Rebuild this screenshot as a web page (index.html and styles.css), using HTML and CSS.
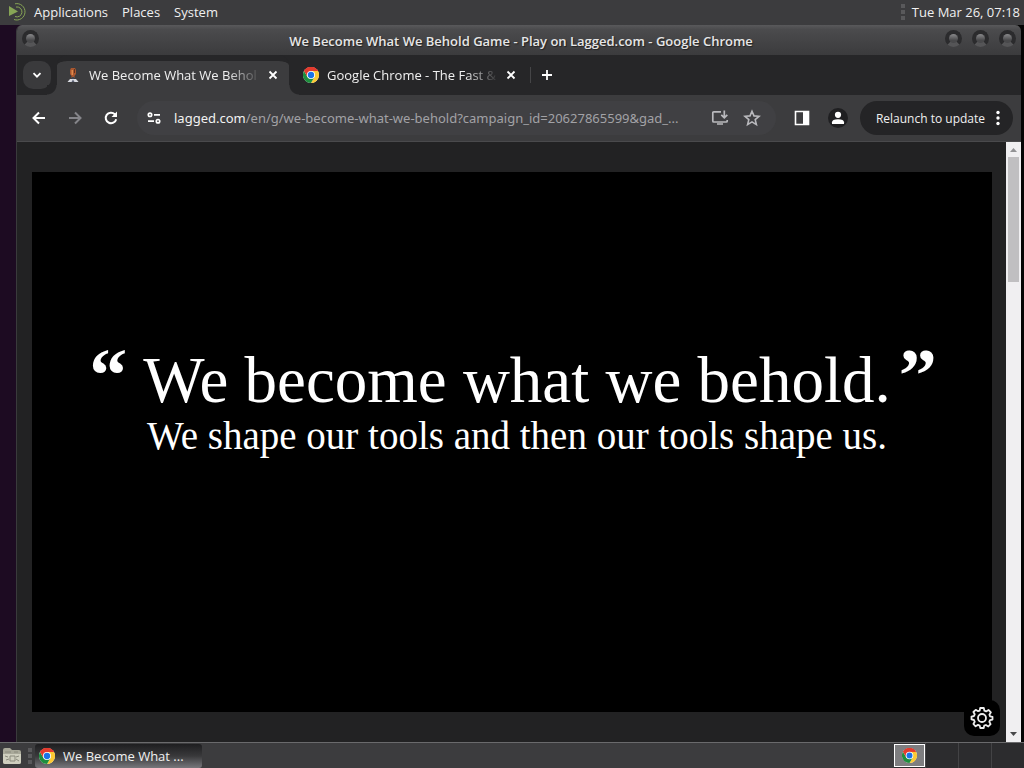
FILE: index.html
```html
<!DOCTYPE html>
<html lang="en">
<head>
    <meta charset="UTF-8">
    <meta name="viewport" content="width=device-width, initial-scale=1.0">
    <title>We Become What We Behold Game - Play on Lagged.com</title>
    <link rel="stylesheet" href="styles.css">
</head>
<body>

    <!-- shared logo -->
    <svg class="defs" width="0" height="0" aria-hidden="true">
        <symbol id="chrome" viewBox="0 0 48 48">
            <circle cx="24" cy="24" r="24" fill="#fff"/>
            <path d="M24 24 L3.2 12 A24 24 0 0 1 44.8 12 Z" fill="#e33b2e"/>
            <path d="M24 12 H44.8 A24 24 0 0 1 24 48 L34.4 30 Z" fill="#fcc934"/>
            <path d="M13.6 30 L3.2 12 A24 24 0 0 0 24 48 L34.4 30 Z" fill="#1e8e3e"/>
            <path d="M24 12 H44.8 A24 24 0 0 0 3.2 12 L13.6 30 Z" fill="#e33b2e"/>
            <circle cx="24" cy="24" r="12" fill="#fff"/>
            <circle cx="24" cy="24" r="9.5" fill="#1a73e8"/>
        </symbol>
    </svg>

    <header class="panel panel-top">
        <svg class="mate" viewBox="0 0 20 20" width="20" height="20" aria-hidden="true">
            <path d="M2 4 L11 9.5 L2 14 Z" fill="#87a556"/>
            <path d="M8 1.8 A8.2 8.2 0 1 1 7 17.5" fill="none" stroke="#87a556" stroke-width="1"/>
            <path d="M9 5 A5 5 0 1 1 8 14.5" fill="none" stroke="#87a556" stroke-width="1"/>
        </svg>
        <nav class="menu">
            <button>Applications</button>
            <button>Places</button>
            <button>System</button>
        </nav>
        <span class="handle"></span>
        <button class="clock">Tue Mar 26, 07:18</button>
    </header>

    <main class="desktop">
        <div class="window">

            <div class="titlebar">
                <button class="knob" aria-label="Window menu"></button>
                <h1>We Become What We Behold Game - Play on Lagged.com - Google Chrome</h1>
                <div class="knobs">
                    <button class="knob" aria-label="Minimize"></button>
                    <button class="knob" aria-label="Maximize"></button>
                    <button class="knob" aria-label="Close"></button>
                </div>
            </div>

            <div class="tabstrip">
                <button class="tab-search" aria-label="Search tabs">
                    <svg viewBox="0 0 12 12" width="12" height="12"><path d="M2.5 4.2 L6 7.7 L9.5 4.2" fill="none" stroke="#fff" stroke-width="1.8"/></svg>
                </button>
                <div class="tab active">
                    <svg viewBox="0 0 16 16" width="16" height="16" aria-hidden="true">
                        <path d="M6 1 H10 L11 3 V7 L9.5 9 V11 H6.5 V9 L5 7 V3 Z" fill="#a9572f"/>
                        <path d="M6.5 3 H8 V8 H6.5 Z" fill="#e08a4c"/>
                        <path d="M9 2 H10 V6 H9 Z" fill="#5d3322"/>
                        <path d="M7 10 H9 V12 H7 Z" fill="#3d4654"/>
                        <path d="M2.5 15 L5 12 H11 L13.5 15 Z" fill="#d9dbe2"/>
                        <path d="M6.5 15 L8 12.5 L9.5 15 Z" fill="#5a6072"/>
                    </svg>
                    <span class="tab-title">We Become What We Behol</span>
                    <button class="close" aria-label="Close tab">
                        <svg viewBox="0 0 10 10" width="10" height="10"><path d="M1.5 1.5 L8.5 8.5 M8.5 1.5 L1.5 8.5" stroke="#fff" stroke-width="1.8"/></svg>
                    </button>
                </div>
                <div class="tab">
                    <svg width="16" height="16" aria-hidden="true"><use href="#chrome"/></svg>
                    <span class="tab-title">Google Chrome - The Fast &amp;</span>
                    <button class="close" aria-label="Close tab">
                        <svg viewBox="0 0 10 10" width="10" height="10"><path d="M1.5 1.5 L8.5 8.5 M8.5 1.5 L1.5 8.5" stroke="#fff" stroke-width="1.8"/></svg>
                    </button>
                </div>
                <span class="tab-line"></span>
                <button class="new-tab" aria-label="New tab">
                    <svg viewBox="0 0 12 12" width="12" height="12"><path d="M6 1 V11 M1 6 H11" stroke="#fff" stroke-width="1.8"/></svg>
                </button>
            </div>

            <div class="toolbar">
                <button class="tool" aria-label="Back">
                    <svg viewBox="0 0 16 16" width="16" height="16"><path d="M14 8 H3 M8 2.5 L2.5 8 L8 13.5" fill="none" stroke="#fff" stroke-width="2"/></svg>
                </button>
                <button class="tool" aria-label="Forward">
                    <svg viewBox="0 0 16 16" width="16" height="16"><path d="M2 8 H13 M8 2.5 L13.5 8 L8 13.5" fill="none" stroke="#85858a" stroke-width="2"/></svg>
                </button>
                <button class="tool" aria-label="Reload">
                    <svg viewBox="0 0 16 16" width="16" height="16"><path d="M13.2 9.2 A5.3 5.3 0 1 1 11.8 4.2 L13 5.5" fill="none" stroke="#fff" stroke-width="2"/><path d="M14 1.5 V7 H8.5 Z" fill="#fff"/></svg>
                </button>
                <div class="omnibox">
                    <svg viewBox="0 0 16 16" width="16" height="16" aria-hidden="true">
                        <g fill="none" stroke="#fff" stroke-width="1.7">
                            <circle cx="4" cy="4.8" r="1.7"/><path d="M8 4.8 H14"/>
                            <circle cx="12" cy="11.2" r="1.7"/><path d="M2 11.2 H8"/>
                        </g>
                    </svg>
                    <a class="url" href="#"><b>lagged.com</b>/en/g/we-become-what-we-behold?campaign_id=20627865599&amp;gad_...</a>
                    <button class="mini" aria-label="Install">
                        <svg viewBox="0 0 18 18" width="18" height="18"><path d="M10 2.8 H2.8 Q1.8 2.8 1.8 3.8 V12 Q1.8 13 2.8 13 H15.2 Q16.2 13 16.2 12 V11 M6 15 H12 M13.3 1.5 V8 M10.3 5.8 L13.3 8.8 L16.3 5.8" fill="none" stroke="#b9b9bd" stroke-width="1.7"/></svg>
                    </button>
                    <button class="mini" aria-label="Bookmark this tab">
                        <svg viewBox="0 0 18 18" width="18" height="18"><path d="M9 2.2 L11 6.9 L16 7.3 L12.2 10.6 L13.4 15.6 L9 12.9 L4.6 15.6 L5.8 10.6 L2 7.3 L7 6.9 Z" fill="none" stroke="#b9b9bd" stroke-width="1.6"/></svg>
                    </button>
                </div>
                <button class="side" aria-label="Side panel">
                    <svg viewBox="0 0 16 16" width="16" height="16"><path d="M1.5 1.5 H14.5 V14.5 H1.5 Z" fill="none" stroke="#fff" stroke-width="1.6"/><path d="M9 1 H15 V15 H9 Z" fill="#fff"/></svg>
                </button>
                <button class="profile" aria-label="Profile">
                    <svg viewBox="0 0 14 14" width="14" height="14"><circle cx="7" cy="3.8" r="3.1" fill="#fff"/><path d="M1 13 V11.3 Q1 8.3 7 8.3 T13 11.3 V13 Z" fill="#fff"/></svg>
                </button>
                <button class="relaunch">
                    Relaunch to update
                    <svg viewBox="0 0 4 16" width="4" height="16" fill="#fff" aria-hidden="true"><circle cx="2" cy="2.5" r="1.7"/><circle cx="2" cy="8" r="1.7"/><circle cx="2" cy="13.5" r="1.7"/></svg>
                </button>
            </div>

            <div class="page">
                <div class="content">
                    <section class="game">
                        <span class="quote">“</span>
                        <div class="lines">
                            <p class="big">We become what we behold.</p>
                            <p class="small">We shape our tools and then our tools shape us.</p>
                        </div>
                        <span class="quote">”</span>
                    </section>
                    <button class="settings" aria-label="Settings">
                        <svg viewBox="0 0 24 24" width="24" height="24" fill="none" stroke="#eee" stroke-width="1.8" stroke-linejoin="round">
                            <path d="M10.2 2 H13.8 L14.4 4.7 L16.1 5.4 L18.5 3.9 L20.9 6.3 L19.4 8.7 L20.1 10.3 L22.5 10.8 V13.6 L20 14.2 L19.3 15.8 L20.6 18.1 L18.3 20.5 L15.9 19 L14.2 19.7 L13.7 22 H10.3 L9.7 19.6 L8 18.9 L5.6 20.3 L3.4 18 L4.7 15.7 L4 14 L1.5 13.4 V10.6 L4 10 L4.7 8.3 L3.4 6 L5.7 3.8 L8.1 5.2 L9.7 4.6 Z"/>
                            <circle cx="12" cy="12" r="4"/>
                        </svg>
                    </button>
                </div>
                <div class="scrollbar">
                    <svg viewBox="0 0 9 5" width="9" height="5"><path d="M1 5 L4.5 1 L8 5 Z" fill="#929294"/></svg>
                    <div class="track"><div class="thumb"></div></div>
                    <svg viewBox="0 0 9 5" width="9" height="5"><path d="M1 0 L4.5 4 L8 0 Z" fill="#48484a"/></svg>
                </div>
            </div>
        </div>
    </main>

    <footer class="panel panel-bottom">
        <button class="show-desktop" aria-label="Show desktop">
            <svg viewBox="0 0 20 18" width="20" height="18">
                <path d="M1 3 Q1 1 3 1 H8 L10 3 H17 Q19 3 19 5 V15 Q19 17 17 17 H3 Q1 17 1 15 Z" fill="#a9a99a"/>
                <path d="M1 7 H19 V15 Q19 17 17 17 H3 Q1 17 1 15 Z" fill="#cfcfbf"/>
                <path d="M8 9 H13 V14 H8 Z M3 9 L6 10 M4 13 L7 12 M14 10 L17 9 M14 12 L17 14 M3 5 H9 M12 5 H16" fill="none" stroke="#8a8a7c" stroke-width="1"/>
            </svg>
        </button>
        <span class="handle"></span>
        <button class="task">
            <svg width="16" height="16" aria-hidden="true"><use href="#chrome"/></svg>
            We Become What ...
        </button>
        <div class="workspaces">
            <button class="current" aria-label="Workspace 1"><svg width="15" height="15"><use href="#chrome"/></svg></button>
            <button aria-label="Workspace 2"></button>
            <button aria-label="Workspace 3"></button>
            <button aria-label="Workspace 4"></button>
        </div>
    </footer>

</body>
</html>
```
FILE: styles.css
```css
* {
    box-sizing: border-box;
}
body {
    margin: 0;
    height: 100vh;
    display: flex;
    flex-direction: column;
    overflow: hidden;
    background: #1b0a20;
    color: #f0f0f0;
    font-family: "Open Sans", "Noto Sans", sans-serif;
    font-size: 13px;
}
button {
    display: flex;
    align-items: center;
    justify-content: center;
    flex-shrink: 0;
    margin: 0;
    padding: 0;
    border: 0;
    background: none;
    color: inherit;
    font: inherit;
    white-space: nowrap;
}
svg {
    display: block;
    flex-shrink: 0;
}
.defs {
    position: absolute;
}

/* desktop panels */
.panel {
    display: flex;
    align-items: center;
    flex-shrink: 0;
    background: #3c3c3e;
}
.panel-top {
    height: 25px;
    padding: 0 4px 2px 7px;
}
.menu {
    display: flex;
    gap: 14px;
    margin-left: 7px;
    flex: 1;
}
.handle {
    width: 4px;
    height: 16px;
    background: repeating-linear-gradient(#59595b 0 4px, #3c3c3e 4px 6px);
}
.clock {
    margin-left: 7px;
}
.desktop {
    flex: 1;
    min-height: 0;
    display: flex;
    padding: 0 3px 0 16px;
    background: linear-gradient(to right, #1d0b22 50%, #050505 50%);
}
.window {
    flex: 1;
    min-width: 0;
    display: flex;
    flex-direction: column;
    border-left: 1px solid #3a3a3c;
    border-radius: 6px 6px 0 0;
    overflow: hidden;
}

/* title bar */
.titlebar {
    height: 30px;
    flex-shrink: 0;
    display: flex;
    align-items: center;
    padding: 0 5px;
    background: linear-gradient(#59595b, #4b4b4d 15%, #3b3b3d);
}
.titlebar h1 {
    flex: 1;
    margin: 0;
    padding: 2px 0 0 58px;
    text-align: center;
    font-size: 13px;
    font-weight: 600;
    color: #e6e6e6;
    text-shadow: 1px 1px 1px #222;
}
.knobs {
    display: flex;
    gap: 10px;
}
.knob {
    width: 17px;
    height: 17px;
    margin-bottom: 3px;
    border-radius: 50%;
    border: 4px solid #2b2b2d;
    border-bottom-color: #555557;
    background: linear-gradient(#8a8a8c, #49494b 70%);
}

/* tabs */
.tabstrip {
    height: 40px;
    flex-shrink: 0;
    display: flex;
    align-items: center;
    padding-left: 6px;
    background: #262628;
}
.tab-search {
    width: 28px;
    height: 28px;
    border-radius: 10px;
    background: #3a3a3c;
}
.tab {
    position: relative;
    width: 232px;
    height: 34px;
    display: flex;
    align-items: center;
    padding: 0 8px;
    margin-left: 6px;
}
.tab.active {
    height: 40px;
    background: #3c3c3e;
    border-radius: 10px 10px 0 0;
    align-self: flex-end;
    border-top: 6px solid #262628;
    background-clip: padding-box;
    padding-bottom: 6px;
}
/* curved feet of the active tab */
.tab.active::before,
.tab.active::after {
    content: "";
    position: absolute;
    bottom: 0;
    width: 10px;
    height: 10px;
}
.tab.active::before {
    left: -10px;
    background: radial-gradient(circle at 0 0, #262628 9px, #3c3c3e 10px);
}
.tab.active::after {
    right: -10px;
    background: radial-gradient(circle at 100% 0, #262628 9px, #3c3c3e 10px);
}
.tab-title {
    margin-left: 8px;
    white-space: nowrap;
    -webkit-mask-image: linear-gradient(to right, #000 138px, transparent 172px);
    mask-image: linear-gradient(to right, #000 138px, transparent 172px);
}
.close {
    width: 16px;
    height: 16px;
    margin-left: auto;
}
.tab-line {
    width: 1px;
    height: 16px;
    margin-left: 3px;
    background: #454547;
}
.new-tab {
    width: 28px;
    height: 28px;
    margin-left: 2px;
}

/* toolbar */
.toolbar {
    height: 47px;
    flex-shrink: 0;
    display: flex;
    align-items: center;
    padding: 0 8px 0 4px;
    background: #3c3c3e;
    border-bottom: 1px solid #4a4a4c;
}
.tool {
    width: 36px;
    height: 36px;
}
.omnibox {
    flex: 1;
    min-width: 0;
    height: 34px;
    display: flex;
    align-items: center;
    margin-left: 8px;
    padding: 0 15px 0 9px;
    border-radius: 17px;
    background: #404043;
}
.url {
    flex: 1;
    min-width: 0;
    margin: 0 8px 0 12px;
    overflow: hidden;
    white-space: nowrap;
    text-overflow: ellipsis;
    text-decoration: none;
    color: #a2a2a6;
    font-family: "Noto Sans", sans-serif;
}
.url b {
    font-weight: 400;
    color: #f2f2f2;
}
.mini + .mini {
    margin-left: 14px;
}
.side {
    width: 28px;
    height: 28px;
    margin-left: 12px;
}
.profile {
    width: 20px;
    height: 20px;
    margin-left: 12px;
    border-radius: 50%;
    background: #1f1f21;
}
.relaunch {
    height: 34px;
    gap: 11px;
    margin-left: 12px;
    padding: 0 13px 0 16px;
    border-radius: 17px;
    background: #242426;
    font-size: 12px;
}

/* web page */
.page {
    flex: 1;
    min-height: 0;
    display: flex;
}
.content {
    position: relative;
    flex: 1;
    min-width: 0;
    display: flex;
    padding: 30px 14px 30px 15px;
    background: #222223;
}
.game {
    flex: 1;
    display: flex;
    justify-content: center;
    padding: 170px 0 0 2px;
    background: #000;
    color: #fff;
    font-family: "Liberation Serif", serif;
    white-space: nowrap;
}
.lines {
    display: flex;
    flex-direction: column;
    align-items: center;
    margin: 0 8px 0 16px;
}
.lines p {
    margin: 0;
}
.big {
    font-size: 65px;
    line-height: 76px;
}
.small {
    font-size: 39px;
    line-height: 36px;
}
.quote {
    font-size: 76px;
    font-weight: 700;
    line-height: 66px;
}
.settings {
    position: absolute;
    right: 6px;
    bottom: 6px;
    width: 36px;
    height: 36px;
    border-radius: 10px;
    background: #000;
}
.scrollbar {
    width: 15px;
    display: flex;
    flex-direction: column;
    align-items: center;
    padding: 5px 2px;
    background: #f0eff1;
}
.track {
    flex: 1;
    width: 100%;
    padding: 5px 0;
}
.thumb {
    height: 22%;
    background: #c0bfc1;
}

/* bottom panel */
.panel-bottom {
    height: 26px;
    padding-left: 2px;
    border-top: 1px solid #6a6a6c;
}
.panel-bottom .handle {
    margin: 0 3px 0 6px;
}
.task {
    width: 167px;
    height: 24px;
    justify-content: flex-start;
    gap: 8px;
    padding-left: 4px;
    border-radius: 3px;
    background: linear-gradient(#1e1e20, #39393b 50%, #77777b);
}
.workspaces {
    display: flex;
    height: 100%;
    margin-left: auto;
    background: #2c2c2e;
}
.workspaces button {
    width: 33px;
    border-left: 1px solid #434345;
}
.workspaces .current {
    width: 31px;
    margin: 1px 0;
    border: 1px solid #fff;
    background: #7e7e80;
}
```
